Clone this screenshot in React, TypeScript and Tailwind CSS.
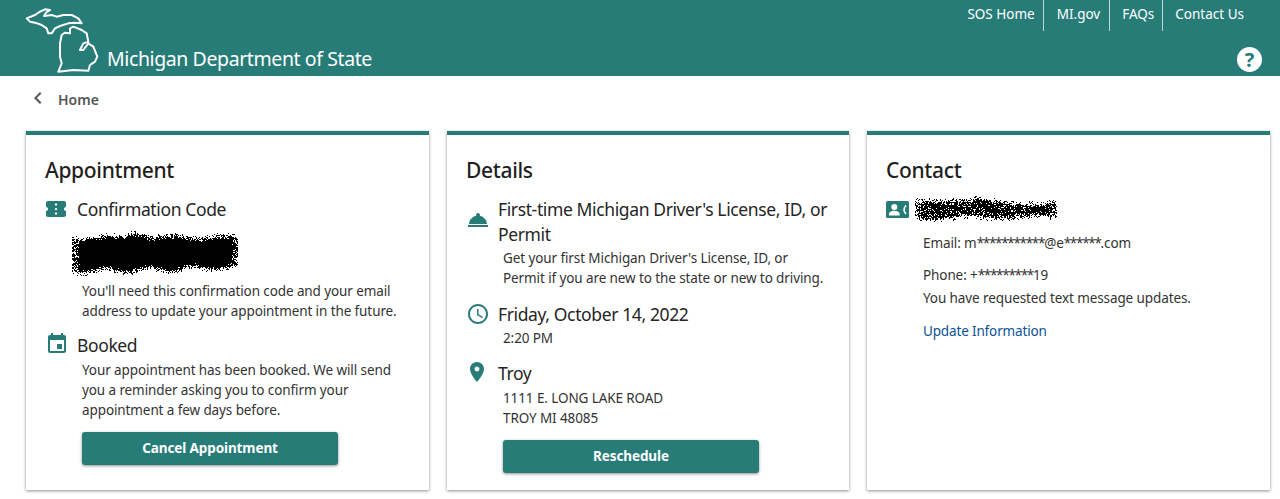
import { MdConfirmationNumber, MdEvent, MdRoomService, MdSchedule, MdPlace, MdChevronLeft } from "react-icons/md";
import type { ReactNode } from "react";

function scribblePath(w: number, h: number, seed: number, edge: (x: number) => [number, number], density: number) {
  let s = seed;
  const rnd = () => {
    s = (s * 1664525 + 1013904223) % 4294967296;
    return s / 4294967296;
  };
  let d = "";
  for (let x = 0; x < w; x++) {
    const [t, b] = edge(x);
    const ramp = Math.min(1, Math.min(x, w - x) / 8);
    for (let y = 0; y < h; y++) {
      const dist = Math.min(y - t, b - y);
      let p = dist < 0 ? Math.max(0, 0.4 + dist * 0.11) : Math.min(1, 0.6 + dist * 0.12);
      p = p * (0.5 + 0.5 * ramp) * density;
      if (rnd() < p) d += `M${x} ${y}h1v1h-1z`;
    }
  }
  return d;
}

const codePath = scribblePath(
  166,
  47,
  11,
  (x) => [6 + 1.5 * Math.sin(x / 9) + (x > 55 && x < 75 ? -4 : 0), 40 + 2 * Math.sin(x / 7) - x * 0.025],
  1,
);
const namePath = scribblePath(
  142,
  26,
  29,
  (x) => [3 + 2 * Math.sin(x / 14) + x * 0.03, 22 + 1.5 * Math.sin(x / 11) - x * 0.015],
  0.85,
);

function Row({ icon, title, indent = "pl-[51px]", children }: { icon: ReactNode; title: ReactNode; indent?: string; children?: ReactNode }) {
  return (
    <div>
      <div className="flex items-center">
        <div className="w-[32px] shrink-0 text-[#277c78]">{icon}</div>
        <div className="text-[17.5px] leading-[25px] tracking-[-0.38px] text-[#252525]">{title}</div>
      </div>
      {children && <div className={indent}>{children}</div>}
    </div>
  );
}

function Card({ title, children }: { title: string; children: ReactNode }) {
  return (
    <section className="border-t-4 border-[#277c78] bg-white px-[19px] pt-[20px] pb-[17px] shadow-[0_1px_3px_rgba(0,0,0,0.45)]">
      <h2 className="text-[21px] leading-[30px] font-medium tracking-[-0.33px] text-[#1f1f1f]">{title}</h2>
      {children}
    </section>
  );
}

function Body({ children }: { children: ReactNode }) {
  return <p className="text-[13.5px] leading-[20px] tracking-[-0.1px] text-[#333333]">{children}</p>;
}

function Stars({ children }: { children: ReactNode }) {
  return <span className="tracking-[-1.3px]">{children}</span>;
}

function Btn({ children }: { children: ReactNode }) {
  return (
    <button className="flex h-[33px] w-[256px] items-center justify-center rounded-[3px] bg-[#277c78] text-[13.5px] font-bold tracking-[-0.1px] text-white shadow-[0_1px_3px_rgba(0,0,0,0.45)]">
      {children}
    </button>
  );
}

export default function App() {
  return (
    <div className="min-h-[499px] bg-white font-['Noto_Sans',sans-serif]">
      <header className="flex h-[76px] bg-[#277c78] pl-[20px] text-white">
        <svg viewBox="0 0 255 228" className="h-[76px] w-[85px] shrink-0" fill="none" stroke="white" strokeWidth="6" strokeLinejoin="round">
          <path d="M20 55 L45 45 L60 35 L75 28 L90 30 L78 38 L72 48 L95 45 L110 50 L130 45 L155 45 L175 55 L185 70 L165 68 L145 70 L120 78 L105 85 L95 100 L85 100 L80 85 L65 75 L45 68 L30 65 Z" />
          <path d="M150 85 L160 80 L185 90 L200 100 L205 125 L190 130 L180 150 L190 150 L205 130 L220 140 L232 170 L225 185 L210 195 L205 212 L160 210 L115 215 L125 190 L120 170 L120 130 L125 105 L135 98 L150 100 Z" />
        </svg>
        <div className="ml-[2px] self-end pb-[3px] text-[19.5px] leading-[28px] tracking-[-0.4px]">Michigan Department of State</div>
        <div className="ml-auto mr-[18px] flex flex-col items-end">
          <nav className="flex h-[31px] text-[13.5px] leading-[29px]">
            <a className="border-r border-white/70 pr-[8px]">SOS Home</a>
            <a className="border-r border-white/70 pl-[13px] pr-[9px]">MI.gov</a>
            <a className="border-r border-white/70 pl-[12px] pr-[8px]">FAQs</a>
            <a className="pl-[12px] pr-[18px]">Contact Us</a>
          </nav>
          <div className="mt-[16px] flex h-[25px] w-[25px] items-center justify-center rounded-full bg-white text-[20px] leading-none font-bold text-[#277c78]">?</div>
        </div>
      </header>

      <div className="flex h-[46px] items-center pl-[26px] text-[14px] font-semibold text-[#555555]">
        <MdChevronLeft size={24} className="mr-[8px] -mt-[2px]" />
        <span>Home</span>
      </div>

      <main className="mt-[9px] grid grid-cols-[403px_402px_403px] gap-[18px] pl-[26px]">
        <Card title="Appointment">
          <div className="mt-[12px]">
            <Row icon={<MdConfirmationNumber size={24} className="-ml-[1px] -translate-y-[1px]" />} title="Confirmation Code" />
          </div>
          <div className="pl-[27px]">
            <svg viewBox="0 0 166 47" className="mt-[9px] block h-[47px] w-[166px]">
              <path d={codePath} fill="black" />
            </svg>
          </div>
          <div className="pl-[37px] pt-[3px]">
            <Body>You'll need this confirmation code and your email address to update your appointment in the future.</Body>
          </div>
          <div className="mt-[12px]">
            <Row icon={<MdEvent size={24} className="-translate-y-[2px]" />} title="Booked" indent="pl-[37px] pt-[2px]">
              <Body>Your appointment has been booked. We will send you a reminder asking you to confirm your appointment a few days before.</Body>
              <div className="mt-[12px]">
                <Btn>Cancel Appointment</Btn>
              </div>
            </Row>
          </div>
        </Card>

        <Card title="Details">
          <div className="mt-[12px]">
            <Row icon={<MdRoomService size={24} className="-translate-y-[2px]" />} title="First-time Michigan Driver's License, ID, or Permit" indent="pl-[37px] pt-[1px]">
              <Body>Get your first Michigan Driver's License, ID, or Permit if you are new to the state or new to driving.</Body>
            </Row>
          </div>
          <div className="mt-[14px]">
            <Row icon={<MdSchedule size={24} className="-translate-y-[1px]" />} title="Friday, October 14, 2022" indent="pl-[37px] pt-[1px]">
              <Body>2:20 PM</Body>
            </Row>
          </div>
          <div className="mt-[13px]">
            <Row icon={<MdPlace size={24} className="-ml-[1px] -translate-y-[2px]" />} title="Troy" indent="pl-[37px] pt-[2px]">
              <Body>1111 E. LONG LAKE ROAD<br />TROY MI 48085</Body>
              <div className="mt-[12px]">
                <Btn>Reschedule</Btn>
              </div>
            </Row>
          </div>
        </Card>

        <Card title="Contact">
          <div className="mt-[11px] flex h-[26px] items-center">
            <svg viewBox="0 0 23 17" className="h-[17px] w-[23px] shrink-0">
              <rect width="23" height="17" rx="1.5" fill="#277c78" />
              <circle cx="8.3" cy="6" r="3" fill="white" />
              <path d="M3 14.5 v-1.5 c0-2 3-3.2 5.3-3.2 s5.3 1.2 5.3 3.2 v1.5 z" fill="white" />
              <path d="M20 4.5 c-2.6 2.4-2.6 6 0 8.5" fill="none" stroke="white" strokeWidth="1.7" />
            </svg>
            <svg viewBox="0 0 142 26" className="ml-[6px] block h-[26px] w-[142px]">
              <path d={namePath} fill="black" />
            </svg>
          </div>
          <div className="pl-[37px] pt-[11px]">
            <Body>Email: m<Stars>***********</Stars>@e<Stars>******</Stars>.com</Body>
            <div className="mt-[12px]">
              <Body>Phone: +<Stars>*********</Stars>19</Body>
            </div>
            <div className="mt-[3px]">
              <Body>You have requested text message updates.</Body>
            </div>
            <a className="mt-[13px] block text-[13.5px] leading-[20px] tracking-[-0.15px] text-[#0b5394]">Update Information</a>
          </div>
        </Card>
      </main>
    </div>
  );
}
